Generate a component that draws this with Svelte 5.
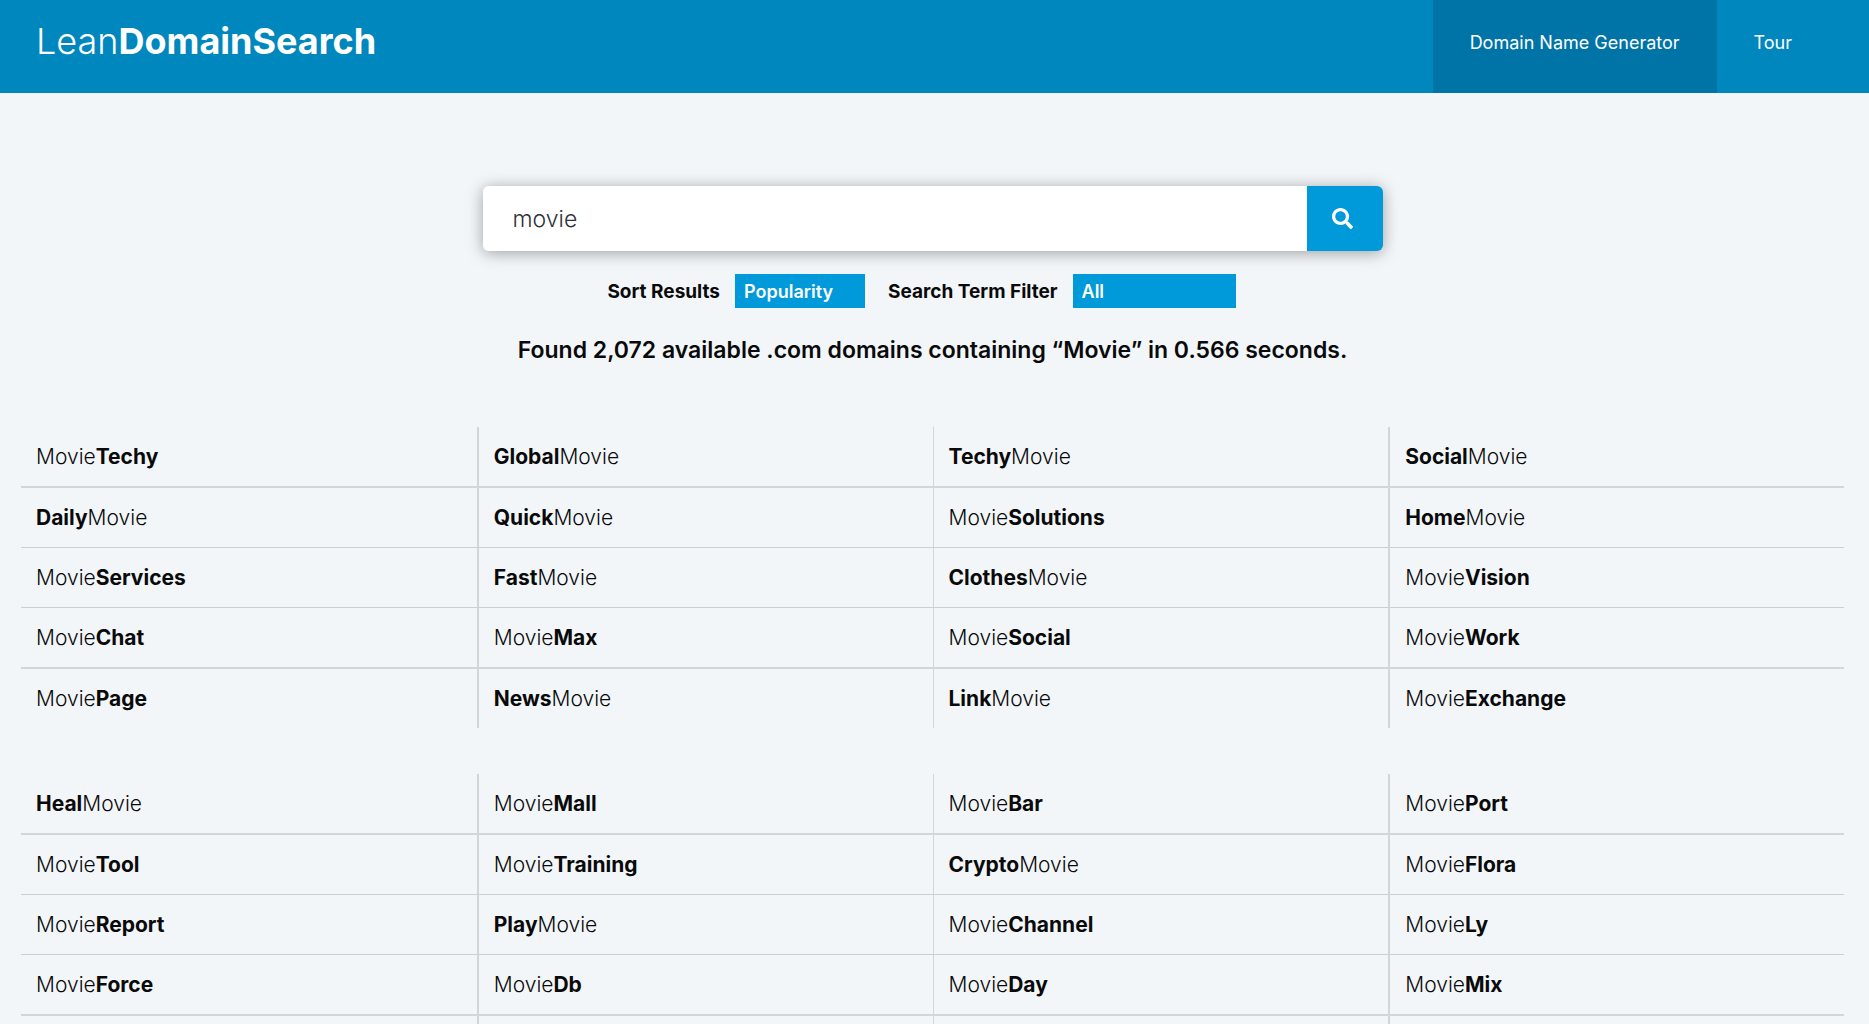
<script lang="ts">
    let term = 'movie';
    let sort = 'Popularity';
    let filter = 'All';

    // A leading or trailing "Movie" is the search term, the rest is set in bold
    const groups = [
        [
            ['MovieTechy', 'GlobalMovie', 'TechyMovie', 'SocialMovie'],
            ['DailyMovie', 'QuickMovie', 'MovieSolutions', 'HomeMovie'],
            ['MovieServices', 'FastMovie', 'ClothesMovie', 'MovieVision'],
            ['MovieChat', 'MovieMax', 'MovieSocial', 'MovieWork'],
            ['MoviePage', 'NewsMovie', 'LinkMovie', 'MovieExchange']
        ],
        [
            ['HealMovie', 'MovieMall', 'MovieBar', 'MoviePort'],
            ['MovieTool', 'MovieTraining', 'CryptoMovie', 'MovieFlora'],
            ['MovieReport', 'PlayMovie', 'MovieChannel', 'MovieLy'],
            ['MovieForce', 'MovieDb', 'MovieDay', 'MovieMix'],
            ['', '', '', '']
        ]
    ];

    function split(name: string) {
        return name.split(/(Movie)/).filter(Boolean);
    }
</script>

<div class="page">
    <header>
        <a class="logo" href="/">Lean<b>DomainSearch</b></a>
        <nav>
            <a class="active" href="/generator">Domain Name Generator</a>
            <a href="/tour">Tour</a>
        </nav>
    </header>

    <main>
        <form class="search" on:submit|preventDefault>
            <input type="text" aria-label="Search term" bind:value={term} />
            <button type="submit" aria-label="Search">
                <svg viewBox="0 0 512 512" width="21" height="21" aria-hidden="true">
                    <path
                        fill="currentColor"
                        d="M505 442.7L405.3 343c-4.500-4.500-10.600-7-17-7H372c27.600-35.300 44-79.700 44-128C416 93.100 322.900 0 208 0S0 93.100 0 208s93.100 208 208 208c48.300 0 92.700-16.400 128-44v16.300c0 6.400 2.500 12.500 7 17l99.700 99.700c9.400 9.400 24.600 9.400 33.900 0l28.300-28.300c9.400-9.400 9.400-24.600.1-34zM208 336c-70.700 0-128-57.200-128-128 0-70.700 57.200-128 128-128 70.700 0 128 57.200 128 128 0 70.700-57.200 128-128 128z"
                    />
                </svg>
            </button>
        </form>

        <div class="filters">
            <label for="sort">Sort Results</label>
            <select id="sort" class="sort" bind:value={sort}>
                <option>Popularity</option>
                <option>Length</option>
                <option>Alphabetical</option>
            </select>
            <label for="filter">Search Term Filter</label>
            <select id="filter" class="filter" bind:value={filter}>
                <option>All</option>
                <option>Starts With</option>
                <option>Ends With</option>
            </select>
        </div>

        <h2>Found 2,072 available .com domains containing “Movie” in 0.566 seconds.</h2>

        {#each groups as rows}
            <table>
                <tbody>
                    {#each rows as row}
                        <tr>
                            {#each row as name}
                                <td>
                                    {#if name}
                                        <a href="#{name}">{#each split(name) as part}{#if part === 'Movie'}{part}{:else}<b>{part}</b>{/if}{/each}</a>
                                    {/if}
                                </td>
                            {/each}
                        </tr>
                    {/each}
                </tbody>
            </table>
        {/each}
    </main>
</div>

<style>
    :global(body) {
        margin: 0;
        background: #f2f6f9;
    }

    .page {
        font-family: Inter, 'Liberation Sans', sans-serif;
        color: #0a0a0a;
    }

    a {
        color: inherit;
        text-decoration: none;
    }

    header {
        display: flex;
        justify-content: space-between;
        height: 93px;
        box-sizing: border-box;
        padding: 0 40px 0 36px;
        background: #0087be;
        color: #fff;
    }

    .logo {
        font-size: 36px;
        font-weight: 300;
        line-height: 82px;
    }

    .logo b {
        font-weight: 700;
    }

    nav {
        display: flex;
    }

    nav a {
        padding: 0 37px;
        font-size: 18px;
        line-height: 86px;
    }

    nav .active {
        background: #0074a6;
    }

    main {
        padding: 93px 25px 0 21px;
    }

    .search {
        display: flex;
        max-width: 900px;
        height: 65px;
        margin: 0 auto;
        border-radius: 6px;
        box-shadow: 0 2px 16px rgba(0, 0, 0, 0.35);
    }

    .search input {
        flex: 1;
        min-width: 0;
        padding: 0 30px;
        border: 0;
        border-radius: 6px 0 0 6px;
        background: #fff;
        font-family: inherit;
        font-size: 23px;
        font-weight: 300;
        color: #2e3338;
        outline: none;
    }

    .search button {
        display: flex;
        align-items: center;
        justify-content: center;
        width: 76px;
        padding: 0 4px 0 0;
        border: 0;
        border-radius: 0 6px 6px 0;
        background: #0099d9;
        color: #fff;
        cursor: pointer;
    }

    .filters {
        display: flex;
        align-items: center;
        justify-content: center;
        margin-top: 23px;
        padding-right: 22px;
        font-size: 19px;
        font-weight: 700;
    }

    select {
        appearance: none;
        height: 34px;
        margin-left: 15px;
        padding: 0 9px;
        border: 0;
        border-radius: 0;
        background: #0099d9;
        color: #fff;
        font-family: inherit;
        font-size: 18px;
        font-weight: 600;
    }

    .sort {
        width: 130px;
        margin-right: 23px;
    }

    .filter {
        width: 163px;
    }

    h2 {
        margin: 25px 0 60px;
        font-size: 23px;
        font-weight: 600;
        line-height: 34px;
        text-align: center;
    }

    table {
        width: 100%;
        margin-bottom: 46px;
        border-spacing: 0;
        table-layout: fixed;
    }

    td {
        height: 59px;
        padding: 0 15px;
        border-left: 2px solid #d2d6d9;
        border-bottom: 1px solid #cbcfd2;
        font-size: 21px;
        font-weight: 300;
    }

    td b {
        font-weight: 700;
    }

    tr:nth-child(3n + 1) td {
        border-bottom: 2px solid #d2d6d9;
    }

    td:nth-child(3) {
        border-left-width: 1px;
    }

    td:first-child {
        border-left: 0;
    }

    tr:last-child td {
        border-bottom: 0;
    }
</style>
